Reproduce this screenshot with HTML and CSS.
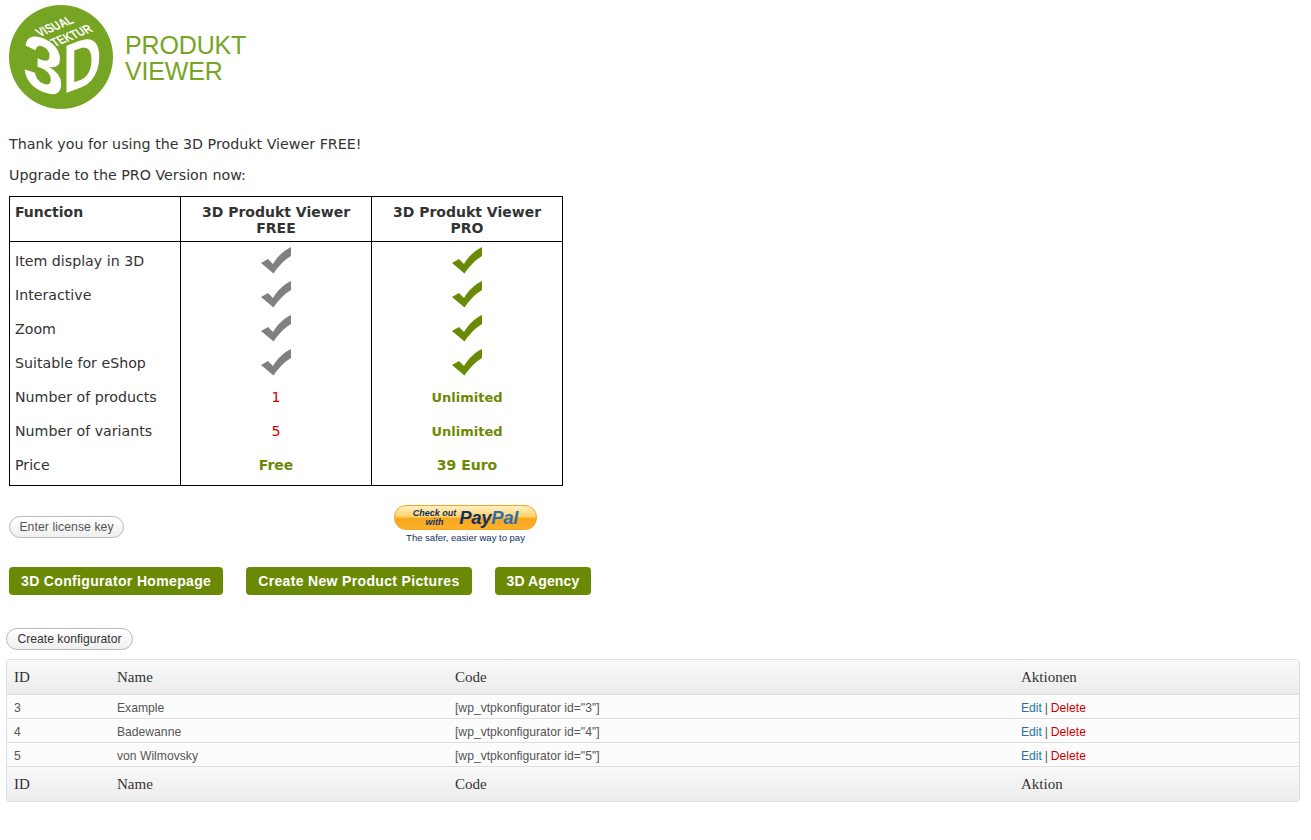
FILE: index.html
```html
<!DOCTYPE html>
<html lang="en">
<head>
    <meta charset="UTF-8">
    <meta name="viewport" content="width=device-width, initial-scale=1.0">
    <title>3D Produkt Viewer</title>
    <link rel="stylesheet" href="styles.css">
</head>
<body>
    <svg width="0" height="0" class="defs">
        <symbol id="check" viewBox="0 0 32 28">
            <path d="M1 17 L8 13 L13 18 C17 11 23 5 31 1 L31 10 C24 14 18 21 13.5 27.5 Z"/>
        </symbol>
    </svg>

    <div class="intro">
        <div class="logo">
            <svg class="logo-mark" width="104" height="104" viewBox="0 0 104 104">
                <circle cx="52" cy="52" r="52" fill="#76a524"/>
                <text class="logo-small" transform="matrix(.68 -.28 .6 .75 31 32)">VISUAL</text>
                <text class="logo-small" transform="matrix(.68 -.28 .6 .75 46 42)">TEKTUR</text>
                <text class="logo-big" transform="translate(14 78) skewY(22) scale(1.02 1.05)">3</text>
                <text class="logo-big" transform="translate(54 89) skewY(-20) scale(.74 .95)">D</text>
            </svg>
            <div class="logo-name">PRODUKT<br>VIEWER</div>
        </div>

        <p class="thanks">Thank you for using the 3D Produkt Viewer FREE!</p>
        <p class="upgrade">Upgrade to the PRO Version now:</p>

        <table class="compare">
            <thead>
                <tr>
                    <th class="col-func">Function</th>
                    <th class="col-ver">3D Produkt Viewer<br>FREE</th>
                    <th class="col-ver">3D Produkt Viewer<br>PRO</th>
                </tr>
            </thead>
            <tbody>
                <tr>
                    <td>Item display in 3D</td>
                    <td><svg class="check grey"><use href="#check"/></svg></td>
                    <td><svg class="check green"><use href="#check"/></svg></td>
                </tr>
                <tr>
                    <td>Interactive</td>
                    <td><svg class="check grey"><use href="#check"/></svg></td>
                    <td><svg class="check green"><use href="#check"/></svg></td>
                </tr>
                <tr>
                    <td>Zoom</td>
                    <td><svg class="check grey"><use href="#check"/></svg></td>
                    <td><svg class="check green"><use href="#check"/></svg></td>
                </tr>
                <tr>
                    <td>Suitable for eShop</td>
                    <td><svg class="check grey"><use href="#check"/></svg></td>
                    <td><svg class="check green"><use href="#check"/></svg></td>
                </tr>
                <tr>
                    <td>Number of products</td>
                    <td class="red">1</td>
                    <td class="good unlimited">Unlimited</td>
                </tr>
                <tr>
                    <td>Number of variants</td>
                    <td class="red">5</td>
                    <td class="good unlimited">Unlimited</td>
                </tr>
                <tr>
                    <td>Price</td>
                    <td class="good">Free</td>
                    <td class="good">39 Euro</td>
                </tr>
            </tbody>
        </table>

        <div class="license-row">
            <a class="pill pill-license" href="#">Enter license key</a>
            <div class="paypal">
                <div class="paypal-btn">
                    <span class="paypal-check">Check out<br>with</span>
                    <span class="paypal-logo"><span class="pay">Pay</span><span class="pal">Pal</span></span>
                </div>
                <div class="paypal-note">The safer, easier way to pay</div>
            </div>
        </div>

        <div class="links">
            <a class="green-btn" href="#">3D Configurator Homepage</a>
            <a class="green-btn" href="#">Create New Product Pictures</a>
            <a class="green-btn agency" href="#">3D Agency</a>
        </div>
    </div>

    <div class="manage">
        <a class="pill pill-create" href="#">Create konfigurator</a>

        <table class="widefat">
            <thead>
                <tr>
                    <th class="c-id">ID</th>
                    <th class="c-name">Name</th>
                    <th class="c-code">Code</th>
                    <th>Aktionen</th>
                </tr>
            </thead>
            <tbody>
                <tr>
                    <td>3</td>
                    <td>Example</td>
                    <td>[wp_vtpkonfigurator id="3"]</td>
                    <td class="actions"><a class="edit" href="#">Edit</a> | <a class="delete" href="#">Delete</a></td>
                </tr>
                <tr>
                    <td>4</td>
                    <td>Badewanne</td>
                    <td>[wp_vtpkonfigurator id="4"]</td>
                    <td class="actions"><a class="edit" href="#">Edit</a> | <a class="delete" href="#">Delete</a></td>
                </tr>
                <tr>
                    <td>5</td>
                    <td>von Wilmovsky</td>
                    <td>[wp_vtpkonfigurator id="5"]</td>
                    <td class="actions"><a class="edit" href="#">Edit</a> | <a class="delete" href="#">Delete</a></td>
                </tr>
            </tbody>
            <tfoot>
                <tr>
                    <th>ID</th>
                    <th>Name</th>
                    <th>Code</th>
                    <th>Aktion</th>
                </tr>
            </tfoot>
        </table>
    </div>
</body>
</html>
```

FILE: styles.css
```css
body {
    margin: 0;
    padding: 0;
    background-color: #fff;
    color: #333;
    font-family: "Liberation Sans", Arial, sans-serif;
    font-size: 12.15px;
}

a {
    text-decoration: none;
}

.defs {
    display: block;
    height: 0;
}

.intro {
    padding: 5px 0 0 9px;
}

.logo {
    display: flex;
    align-items: center;
    height: 106px;
}

.logo-mark {
    display: block;
    margin-bottom: 2px;
}

.logo-small {
    fill: #fff;
    font-family: "Liberation Sans", Arial, sans-serif;
    font-size: 14px;
    font-weight: bold;
}

.logo-big {
    fill: #fff;
    font-family: "Liberation Sans", Arial, sans-serif;
    font-size: 72px;
    font-weight: bold;
}

.logo-name {
    margin: 1px 0 0 12px;
    color: #76a524;
    font-family: "Liberation Sans", Arial, sans-serif;
    font-size: 25px;
    letter-spacing: -.15px;
    line-height: 25.5px;
}

.thanks, .upgrade {
    margin: 0;
    font-family: "DejaVu Sans", Verdana, sans-serif;
    font-size: 14.25px;
    line-height: 18px;
    color: #333;
}

.thanks {
    margin-top: 24px;
}

.upgrade {
    margin-top: 13px;
}

.compare {
    width: 554px;
    margin-top: 12px;
    border-collapse: collapse;
    border: 1px solid #000;
    font-family: "DejaVu Sans", Verdana, sans-serif;
    font-size: 14.2px;
    table-layout: fixed;
}

.compare th {
    height: 45px;
    padding: 7px 5px 0;
    border: 1px solid #000;
    box-sizing: border-box;
    font-size: 14px;
    vertical-align: top;
    line-height: 16px;
}

.compare .col-func {
    width: 171px;
    text-align: left;
}

.compare .col-ver {
    width: 191px;
}

.compare td {
    height: 34px;
    padding: 0 5px;
    border-left: 1px solid #000;
    text-align: center;
    vertical-align: middle;
}

.compare td:first-child {
    border-left: 0;
    text-align: left;
}

.compare tbody tr:first-child td {
    padding-top: 2px;
}

.compare tbody tr:last-child td {
    padding-bottom: 3px;
}

.check {
    display: block;
    width: 32px;
    height: 28px;
    margin: -1px auto 1px;
}

.grey {
    fill: #808080;
}

.green {
    fill: #6a8a05;
}

.red {
    color: #c00;
}

.good {
    color: #6a8a05;
    font-size: 14px;
    font-weight: bold;
}

.compare .unlimited {
    font-size: 13px;
}

.license-row {
    display: flex;
    align-items: flex-start;
    margin-top: 19px;
}

.pill {
    display: inline-block;
    box-sizing: border-box;
    height: 22px;
    border: 1px solid #bbb;
    border-radius: 11px;
    background: linear-gradient(#fff, #efefef);
    line-height: 20px;
    text-align: center;
}

.pill-license {
    width: 115px;
    margin-top: 11px;
    color: #555;
    letter-spacing: .1px;
}

.paypal {
    width: 143px;
    margin-left: 270px;
}

.paypal-btn {
    display: flex;
    align-items: center;
    justify-content: center;
    gap: 3px;
    box-sizing: border-box;
    height: 25px;
    border: 1px solid #f5a623;
    border-radius: 12px;
    background: linear-gradient(#fff0c4, #ffd36a 45%, #f9a81e 55%, #fcb02a);
    color: #0e3168;
    font-style: italic;
    font-weight: bold;
}

.paypal-check {
    font-size: 9px;
    line-height: 9px;
    text-align: center;
}

.paypal-logo {
    font-size: 18.5px;
    letter-spacing: -.3px;
}

.pay {
    color: #0e3168;
}

.pal {
    color: #2a6fb4;
}

.paypal-note {
    margin-top: 2px;
    color: #0e3168;
    font-size: 9.5px;
    line-height: 12px;
    text-align: center;
}

.links {
    display: flex;
    gap: 23px;
    margin-top: 23px;
}

.green-btn {
    display: block;
    height: 28px;
    padding: 0 12px;
    border-radius: 4px;
    background-color: #6a8a05;
    color: #fff;
    font-size: 14px;
    font-weight: bold;
    letter-spacing: .34px;
    line-height: 28px;
}

.agency {
    letter-spacing: .1px;
}

.manage {
    padding: 33px 11px 0 6px;
}

.pill-create {
    display: block;
    width: 127px;
    color: #333;
}

.widefat {
    width: 100%;
    margin-top: 9px;
    border: 1px solid #dfdfdf;
    border-radius: 3px;
    border-spacing: 0;
    table-layout: fixed;
    color: #555;
}

.widefat th {
    height: 34px;
    padding: 0 7px;
    background: linear-gradient(#f9f9f9, #ececec);
    color: #333;
    font-family: "Liberation Serif", Georgia, serif;
    font-size: 15px;
    font-weight: normal;
    text-align: left;
}

.widefat td {
    height: 21px;
    padding: 2px 7px 0;
    border-top: 1px solid #dfdfdf;
    background-color: #fcfcfc;
}

.widefat tfoot th {
    border-top: 1px solid #dfdfdf;
}

.c-id {
    width: 89px;
}

.c-name {
    width: 324px;
}

.c-code {
    width: 552px;
}

.actions {
    word-spacing: -.5px;
}

.edit {
    color: #21759b;
}

.delete {
    color: #c00;
}
```
